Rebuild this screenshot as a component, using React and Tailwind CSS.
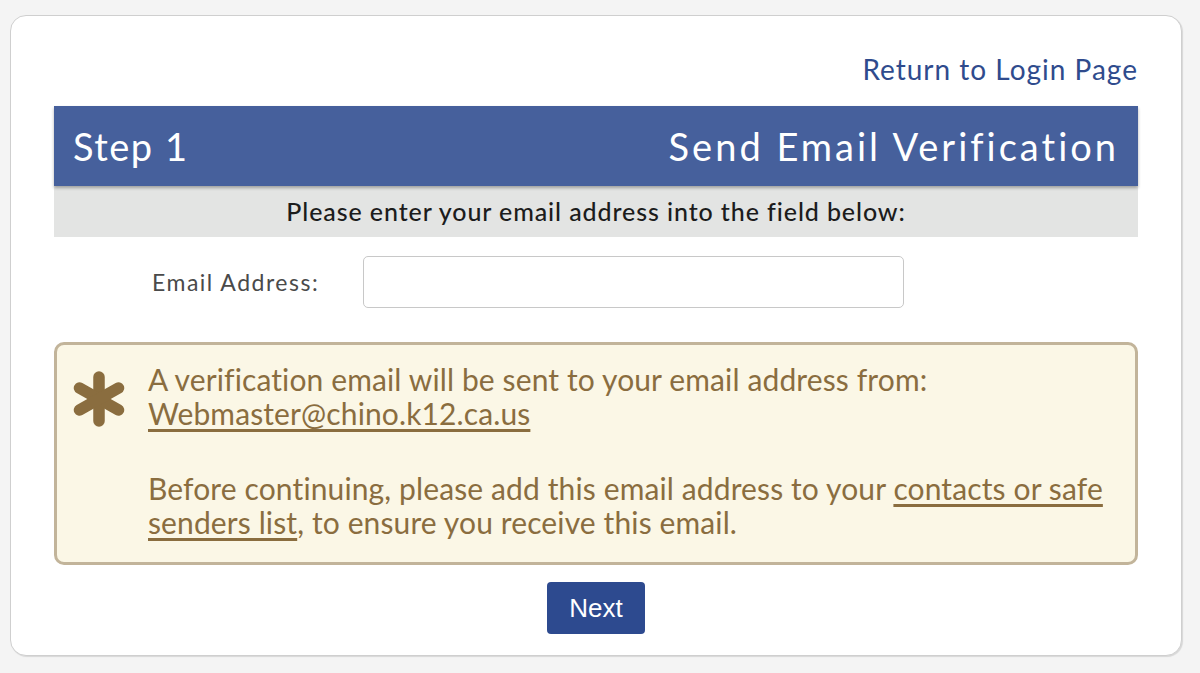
import React from 'react';

const font = { fontFamily: 'Lato, "Noto Sans", sans-serif' };

function Asterisk() {
  return (
    <svg width="54" height="56" viewBox="0 0 54 56" className="shrink-0">
      <g stroke="#8a6d3f" strokeWidth="11.5" strokeLinecap="round">
        <line x1="27" y1="6" x2="27" y2="50" />
        <line x1="7.5" y1="17" x2="46.5" y2="39" />
        <line x1="7.5" y1="39" x2="46.5" y2="17" />
      </g>
    </svg>
  );
}

export default function App() {
  return (
    <div className="min-h-screen bg-[#f4f4f4] pt-[15px] pl-[10px] pr-[18px]" style={font}>
      <div className="h-[641px] rounded-[16px] border border-[#cfcfcf] bg-white px-[43px] shadow-[1px_1px_1px_rgba(0,0,0,0.12)]">
        {/* Return link */}
        <div className="flex justify-end pt-[36px] pb-[20px]">
          <a href="#" className="text-[28px] leading-[34px] tracking-[1px] text-[#2f4b8d] no-underline">
            Return to Login Page
          </a>
        </div>

        {/* Step header */}
        <div className="relative flex h-[80px] items-center justify-between bg-[#46609c] px-[19px] text-white shadow-[0_2px_3px_rgba(0,0,0,0.3)]">
          <span className="text-[38px] tracking-[1.5px]">Step 1</span>
          <span className="text-[38px] tracking-[3px]">Send Email Verification</span>
        </div>
        <div className="flex h-[51px] items-center justify-center bg-[#e3e4e3] text-[25px] font-medium tracking-[0.9px] text-[#1c1c1c]">
          Please enter your email address into the field below:
        </div>

        {/* Email row */}
        <div className="mt-[19px] flex items-center">
          <label className="w-[309px] pl-[98px] text-[23px] tracking-[1.5px] text-[#4a4a4a]">Email Address:</label>
          <input
            type="text"
            className="h-[52px] w-[541px] rounded-[5px] border border-[#c8c8c8] bg-white px-3 text-[20px] outline-none"
          />
        </div>

        {/* Notice */}
        <div className="mt-[34px] flex h-[223px] gap-[22px] rounded-[10px] border-[3px] border-[#c2b49a] bg-[#fbf7e6] pl-[15px] pt-[17px] text-[30px] leading-[34px] tracking-[0.12px] text-[#8a6d3f]">
          <div className="pt-[9px]">
            <Asterisk />
          </div>
          <div className="whitespace-nowrap">
            <p>A verification email will be sent to your email address from:</p>
            <p>
              <a href="#" className="underline underline-offset-[4px]">Webmaster@chino.k12.ca.us</a>
            </p>
            <p className="mt-[41px]">
              Before continuing, please add this email address to your{' '}
              <a href="#" className="underline underline-offset-[4px]">contacts or safe</a>
            </p>
            <p>
              <a href="#" className="underline underline-offset-[4px]">senders list</a>, to ensure you receive this email.
            </p>
          </div>
        </div>

        {/* Next */}
        <div className="mt-[17px] flex justify-center">
          <button
            className="h-[52px] w-[98px] rounded-[4px] bg-[#2d4a8f] text-[26px] text-white"
            style={{ fontFamily: '"Liberation Sans", Arial, sans-serif' }}
          >
            Next
          </button>
        </div>
      </div>
    </div>
  );
}
